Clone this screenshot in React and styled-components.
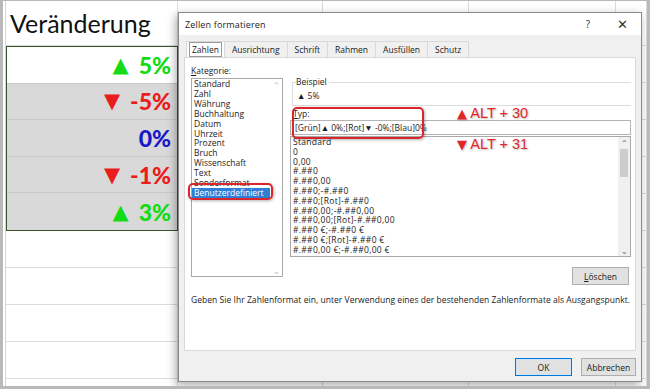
import React from "react";
import styled, { createGlobalStyle } from "styled-components";

const GlobalStyle = createGlobalStyle`
  html, body { margin: 0; padding: 0; background: #fff; }
  body { width: 650px; height: 389px; overflow: hidden; }
`;

const Frame = styled.div`
  position: relative;
  width: 650px;
  height: 389px;
  box-sizing: border-box;
  border: 3px solid #b9b9b9;
  border-top-width: 1px;
  background: #fff;
  overflow: hidden;
  font-family: "Open Sans", "Noto Sans", sans-serif;
`;

/* ---------- spreadsheet behind ---------- */

const Sheet = styled.div`
  display: grid;
  grid-template-columns: 172px 145px 146px 147px 1fr;
  grid-template-rows: 45px;
  grid-auto-rows: 37px;
  margin-left: 2px;
  border-left: 1px solid #d6d6d6;
  font-family: Lato, "Open Sans", sans-serif;
`;

const Cell = styled.div`
  box-sizing: border-box;
  border-right: 1px solid #dcdcdc;
  border-bottom: 1px solid #dcdcdc;
`;

const HeaderCell = styled(Cell)`
  display: flex;
  align-items: center;
  padding-left: 4px;
  font-size: 25px;
  color: #111;
`;

const Block = styled.div`
  grid-column: 1;
  grid-row: 2 / span 5;
  display: grid;
  grid-template-rows: repeat(5, 1fr);
  border: 1px solid #3b5329;
  box-sizing: border-box;
`;

const ValueCell = styled.div`
  display: flex;
  align-items: center;
  justify-content: flex-end;
  padding-right: 6px;
  background: ${(p) => (p.$shaded ? "#d9d9d9" : "#fff")};
  border-bottom: ${(p) => (p.$last ? "none" : "1px solid #c8c8c8")};
  color: ${(p) => p.$color};
  font-weight: 900;
  font-size: 23px;
`;

const Arrow = styled.span`
  font-family: "DejaVu Sans", sans-serif;
  font-size: 21px;
  margin-right: 10px;
`;

/* ---------- dialog ---------- */

const Dialog = styled.div`
  position: absolute;
  left: 175px;
  top: 11px;
  width: 464px;
  height: 370px;
  box-sizing: border-box;
  display: flex;
  flex-direction: column;
  background: #f0f0f0;
  border: 1px solid #8a8a8a;
  box-shadow: -2px 3px 9px rgba(0, 0, 0, 0.35);
  font-size: 8.5px;
  color: #1b1b1b;
`;

const TitleBar = styled.div`
  height: 22px;
  display: flex;
  align-items: center;
  background: #fff;
  padding-left: 6px;
  font-size: 9px;
  letter-spacing: 0.15px;
`;

const Title = styled.span`
  flex: 1;
`;

const TitleButton = styled.span`
  width: ${(p) => p.$w}px;
  text-align: center;
  font-size: ${(p) => p.$size}px;
  color: #333;
`;

const Body = styled.div`
  flex: 1;
  display: flex;
  flex-direction: column;
  padding: 6px 5px 5px 6px;
`;

const Tabs = styled.div`
  display: flex;
  height: 16px;
  padding-left: 1px;
`;

const Tab = styled.div`
  display: flex;
  align-items: center;
  padding: 0 ${(p) => p.$pad}px;
  border: 1px solid #d9d9d9;
  border-bottom: none;
  border-left: ${(p) => (p.$first ? "1px solid #d9d9d9" : "none")};
  background: ${(p) => (p.$active ? "#fff" : "#f0f0f0")};
  span {
    padding: 1px 2px;
    border: ${(p) => (p.$active ? "1px solid #9a9a9a" : "1px solid transparent")};
  }
`;

const Panel = styled.div`
  height: 294px;
  box-sizing: border-box;
  margin-left: -1px;
  background: #fff;
  border: 1px solid #d9d9d9;
  display: flex;
  flex-direction: column;
  padding: 7px 4px 0 6px;
`;

const Columns = styled.div`
  display: flex;
  gap: 7px;
`;

const LeftCol = styled.div`
  width: 92px;
  display: flex;
  flex-direction: column;
`;

const RightCol = styled.div`
  width: 341px;
  display: flex;
  flex-direction: column;
  padding-top: 12px;
`;

const Label = styled.div`
  line-height: 11px;
  u { text-decoration: underline; }
`;

const ListBox = styled.div`
  display: flex;
  height: ${(p) => p.$h}px;
  margin-top: ${(p) => p.$mt || 0}px;
  box-sizing: border-box;
  border: 1px solid #a9a9a9;
  background: #fff;
`;

const Items = styled.div`
  flex: 1;
  overflow: hidden;
  letter-spacing: ${(p) => p.$ls || 0}px;
`;

const Item = styled.div`
  line-height: ${(p) => p.$lh}px;
  padding-left: 2px;
  white-space: nowrap;
  background: ${(p) => (p.$selected ? "#2f7fd6" : "transparent")};
  color: ${(p) => (p.$selected ? "#fff" : "#1b1b1b")};
`;

const ScrollBar = styled.div`
  width: 12px;
  display: flex;
  flex-direction: column;
  align-items: stretch;
  background: ${(p) => (p.$disabled ? "#fff" : "#f0f0f0")};
  color: ${(p) => (p.$disabled ? "#b8b8b8" : "#606060")};
`;

const ScrollArrow = styled.div`
  height: 11px;
  display: flex;
  align-items: center;
  justify-content: center;
  font-size: 8px;
`;

const Track = styled.div`
  flex: 1;
  padding: 1px 2px;
`;

const Thumb = styled.div`
  height: 28px;
  background: #cdcdcd;
`;

const GroupBox = styled.fieldset`
  margin: 0 0 0 2px;
  padding: 3px 4px 3px;
  border: 1px solid #dcdcdc;
  border-right: none;
  legend {
    padding: 0 2px 0 0;
    margin-left: -1px;
    line-height: 10px;
  }
`;

const Sample = styled.div`
  line-height: 12px;
`;

const TypeLabel = styled(Label)`
  margin-top: 2px;
  padding-left: 3px;
`;

const TypeInput = styled.div`
  height: 15px;
  margin-top: 1px;
  box-sizing: border-box;
  border: 1px solid #b4b4b4;
  display: flex;
  align-items: center;
  padding-left: 4px;
  white-space: nowrap;
`;

const Button = styled.div`
  width: ${(p) => p.$w}px;
  height: 18px;
  box-sizing: border-box;
  display: flex;
  align-items: center;
  justify-content: center;
  background: #e1e1e1;
  border: 1px solid ${(p) => (p.$default ? "#0078d7" : "#adadad")};
  box-shadow: ${(p) => (p.$default ? "inset 0 0 0 1px #cfe4f7" : "none")};
  u { text-decoration: underline; }
`;

const ClearRow = styled.div`
  display: flex;
  justify-content: flex-end;
  margin-top: 10px;
  padding-right: 2px;
`;

const Hint = styled.div`
  margin-top: 9px;
  line-height: 11px;
  white-space: nowrap;
  letter-spacing: 0.04px;
`;

const Footer = styled.div`
  display: flex;
  justify-content: flex-end;
  gap: 9px;
  margin-top: 7px;
`;

/* ---------- annotations over the picture ---------- */

const Marker = styled.div`
  position: absolute;
  left: ${(p) => p.$x}px;
  top: ${(p) => p.$y}px;
  width: ${(p) => p.$w}px;
  height: ${(p) => p.$h}px;
  border: 2px solid #d8262c;
  border-radius: 5px;
  box-sizing: border-box;
  box-shadow: 1px 1px 3px rgba(0, 0, 0, 0.3);
`;

const Note = styled.div`
  position: absolute;
  left: ${(p) => p.$x}px;
  top: ${(p) => p.$y}px;
  font-family: "Liberation Sans", Arial, sans-serif;
  font-size: 14.5px;
  line-height: 16px;
  color: #e0262b;
  white-space: nowrap;
  text-shadow: 1px 1px 2px rgba(0, 0, 0, 0.25), 0 0 2px #fff;
  span {
    font-family: "DejaVu Sans", sans-serif;
    font-size: 13px;
  }
`;

const values = [
  { arrow: "▲", text: "5%", color: "#14dc14" },
  { arrow: "▼", text: "-5%", color: "#ea1c1c" },
  { arrow: "", text: "0%", color: "#1818c8" },
  { arrow: "▼", text: "-1%", color: "#ea1c1c" },
  { arrow: "▲", text: "3%", color: "#14dc14" },
];

const categories = [
  "Standard", "Zahl", "Währung", "Buchhaltung", "Datum", "Uhrzeit", "Prozent",
  "Bruch", "Wissenschaft", "Text", "Sonderformat", "Benutzerdefiniert",
];

const formats = [
  "Standard", "0", "0,00", "#.##0", "#.##0,00", "#.##0;-#.##0",
  "#.##0;[Rot]-#.##0", "#.##0,00;-#.##0,00", "#.##0,00;[Rot]-#.##0,00",
  "#.##0 €;-#.##0 €", "#.##0 €;[Rot]-#.##0 €", "#.##0,00 €;-#.##0,00 €",
];

const tabs = [
  { label: "Zahlen", pad: 2 },
  { label: "Ausrichtung", pad: 4 },
  { label: "Schrift", pad: 4 },
  { label: "Rahmen", pad: 4 },
  { label: "Ausfüllen", pad: 4 },
  { label: "Schutz", pad: 4 },
];

const emptyRows = 5;

export default function App() {
  return (
    <Frame>
      <GlobalStyle />
      <Sheet>
        <HeaderCell>Veränderung</HeaderCell>
        {[0, 1, 2, 3].map((i) => <Cell key={"h" + i} />)}
        <Block>
          {values.map((v, i) => (
            <ValueCell key={i} $shaded={i > 0} $last={i === values.length - 1} $color={v.color}>
              {v.arrow && <Arrow>{v.arrow}</Arrow>}
              {v.text}
            </ValueCell>
          ))}
        </Block>
        {Array.from({ length: 5 * 4 }).map((_, i) => (
          <Cell key={"b" + i} />
        ))}
        {Array.from({ length: emptyRows * 5 }).map((_, i) => (
          <Cell key={"e" + i} />
        ))}
      </Sheet>

      <Dialog>
        <TitleBar>
          <Title>Zellen formatieren</Title>
          <TitleButton $w={34} $size={10}>?</TitleButton>
          <TitleButton $w={36} $size={13}>✕</TitleButton>
        </TitleBar>
        <Body>
          <Tabs>
            {tabs.map((t, i) => (
              <Tab key={t.label} $first={i === 0} $active={i === 0} $pad={t.pad}>
                <span>{t.label}</span>
              </Tab>
            ))}
          </Tabs>
          <Panel>
            <Columns>
              <LeftCol>
                <Label><u>K</u>ategorie:</Label>
                <ListBox $h={199} $mt={2}>
                  <Items>
                    {categories.map((c) => (
                      <Item key={c} $lh={9.9} $selected={c === "Benutzerdefiniert"}>{c}</Item>
                    ))}
                  </Items>
                  <ScrollBar $disabled>
                    <ScrollArrow>⌃</ScrollArrow>
                    <Track />
                    <ScrollArrow>⌄</ScrollArrow>
                  </ScrollBar>
                </ListBox>
              </LeftCol>
              <RightCol>
                <GroupBox>
                  <legend>Beispiel</legend>
                  <Sample>▲ 5%</Sample>
                </GroupBox>
                <TypeLabel><u>T</u>yp:</TypeLabel>
                <TypeInput>[Grün]▲ 0%;[Rot]▼ -0%;[Blau]0%</TypeInput>
                <ListBox $h={121} $mt={1}>
                  <Items $ls={0.3}>
                    {formats.map((f, i) => (
                      <Item key={i} $lh={9.8}>{f}</Item>
                    ))}
                  </Items>
                  <ScrollBar>
                    <ScrollArrow>⌃</ScrollArrow>
                    <Track><Thumb /></Track>
                    <ScrollArrow>⌄</ScrollArrow>
                  </ScrollBar>
                </ListBox>
                <ClearRow>
                  <Button $w={57}><span><u>L</u>öschen</span></Button>
                </ClearRow>
              </RightCol>
            </Columns>
            <Hint>
              Geben Sie Ihr Zahlenformat ein, unter Verwendung eines der bestehenden Zahlenformate als Ausgangspunkt.
            </Hint>
          </Panel>
          <Footer>
            <Button $w={57} $default>OK</Button>
            <Button $w={55}>Abbrechen</Button>
          </Footer>
        </Body>
      </Dialog>

      <Marker $x={185} $y={182} $w={85} $h={17} />
      <Marker $x={289} $y={106} $w={132} $h={32} />
      <Note $x={454} $y={104}><span>▲</span> ALT + 30</Note>
      <Note $x={454} $y={135}><span>▼</span> ALT + 31</Note>
    </Frame>
  );
}
